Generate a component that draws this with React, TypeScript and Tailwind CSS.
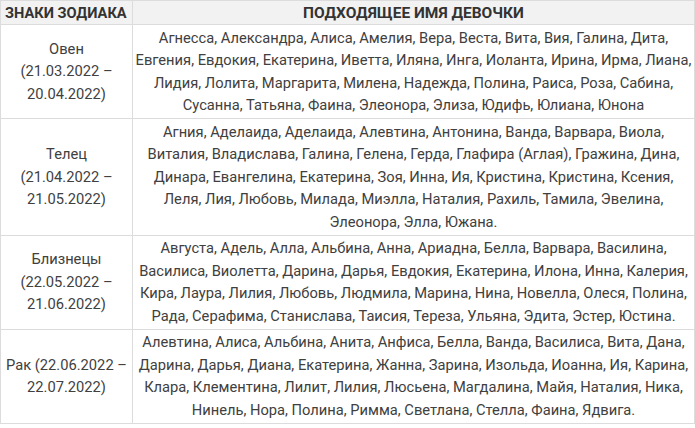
import React from "react";

const rows: { sign: string[]; names: string[] }[] = [
  {
    sign: ["Овен", "(21.03.2022 –", "20.04.2022)"],
    names: [
      "Агнесса, Александра, Алиса, Амелия, Вера, Веста, Вита, Вия, Галина, Дита,",
      "Евгения, Евдокия, Екатерина, Иветта, Иляна, Инга, Иоланта, Ирина, Ирма, Лиана,",
      "Лидия, Лолита, Маргарита, Милена, Надежда, Полина, Раиса, Роза, Сабина,",
      "Сусанна, Татьяна, Фаина, Элеонора, Элиза, Юдифь, Юлиана, Юнона",
    ],
  },
  {
    sign: ["Телец", "(21.04.2022 –", "21.05.2022)"],
    names: [
      "Агния, Аделаида, Аделаида, Алевтина, Антонина, Ванда, Варвара, Виола,",
      "Виталия, Владислава, Галина, Гелена, Герда, Глафира (Аглая), Гражина, Дина,",
      "Динара, Евангелина, Екатерина, Зоя, Инна, Ия, Кристина, Кристина, Ксения,",
      "Леля, Лия, Любовь, Милада, Миэлла, Наталия, Рахиль, Тамила, Эвелина,",
      "Элеонора, Элла, Южана.",
    ],
  },
  {
    sign: ["Близнецы", "(22.05.2022 –", "21.06.2022)"],
    names: [
      "Августа, Адель, Алла, Альбина, Анна, Ариадна, Белла, Варвара, Василина,",
      "Василиса, Виолетта, Дарина, Дарья, Евдокия, Екатерина, Илона, Инна, Калерия,",
      "Кира, Лаура, Лилия, Любовь, Людмила, Марина, Нина, Новелла, Олеся, Полина,",
      "Рада, Серафима, Станислава, Таисия, Тереза, Ульяна, Эдита, Эстер, Юстина.",
    ],
  },
  {
    sign: ["Рак (22.06.2022 –", "22.07.2022)"],
    names: [
      "Алевтина, Алиса, Альбина, Анита, Анфиса, Белла, Ванда, Василиса, Вита, Дана,",
      "Дарина, Дарья, Диана, Екатерина, Жанна, Зарина, Изольда, Иоанна, Ия, Карина,",
      "Клара, Клементина, Лилит, Лилия, Люсьена, Магдалина, Майя, Наталия, Ника,",
      "Нинель, Нора, Полина, Римма, Светлана, Стелла, Фаина, Ядвига.",
    ],
  },
];

export default function App() {
  return (
    <div
      className="w-[695px] h-[428px] bg-white overflow-hidden text-[#404040]"
      style={{ fontFamily: "Roboto, 'Noto Sans', sans-serif" }}
    >
      <table className="w-[695px] border-collapse text-[14.7px] leading-[22.5px]">
        <thead>
          <tr className="bg-[#f2f2f2] h-[24px]">
            <th className="w-[132px] border border-[#dcdcdc] px-1 py-0 text-left text-[14.6px] leading-[22px] font-bold uppercase whitespace-nowrap text-[#333]">
              ЗНАКИ ЗОДИАКА
            </th>
            <th className="border border-[#dcdcdc] px-1 py-0 text-center text-[15.5px] leading-[22px] font-bold uppercase text-[#333]">
              ПОДХОДЯЩЕЕ ИМЯ ДЕВОЧКИ
            </th>
          </tr>
        </thead>
        <tbody>
          {rows.map((r, i) => (
            <tr key={i}>
              <td className="border border-[#dcdcdc] px-1 py-[1.5px] text-center align-middle">
                {r.sign.map((s, j) => (
                  <div key={j} className="whitespace-nowrap">
                    {s}
                  </div>
                ))}
              </td>
              <td className="border border-[#dcdcdc] px-0 py-[1.5px] text-center align-middle">
                {r.names.map((s, j) => (
                  <div key={j} className="whitespace-nowrap">
                    {s}
                  </div>
                ))}
              </td>
            </tr>
          ))}
        </tbody>
      </table>
    </div>
  );
}
